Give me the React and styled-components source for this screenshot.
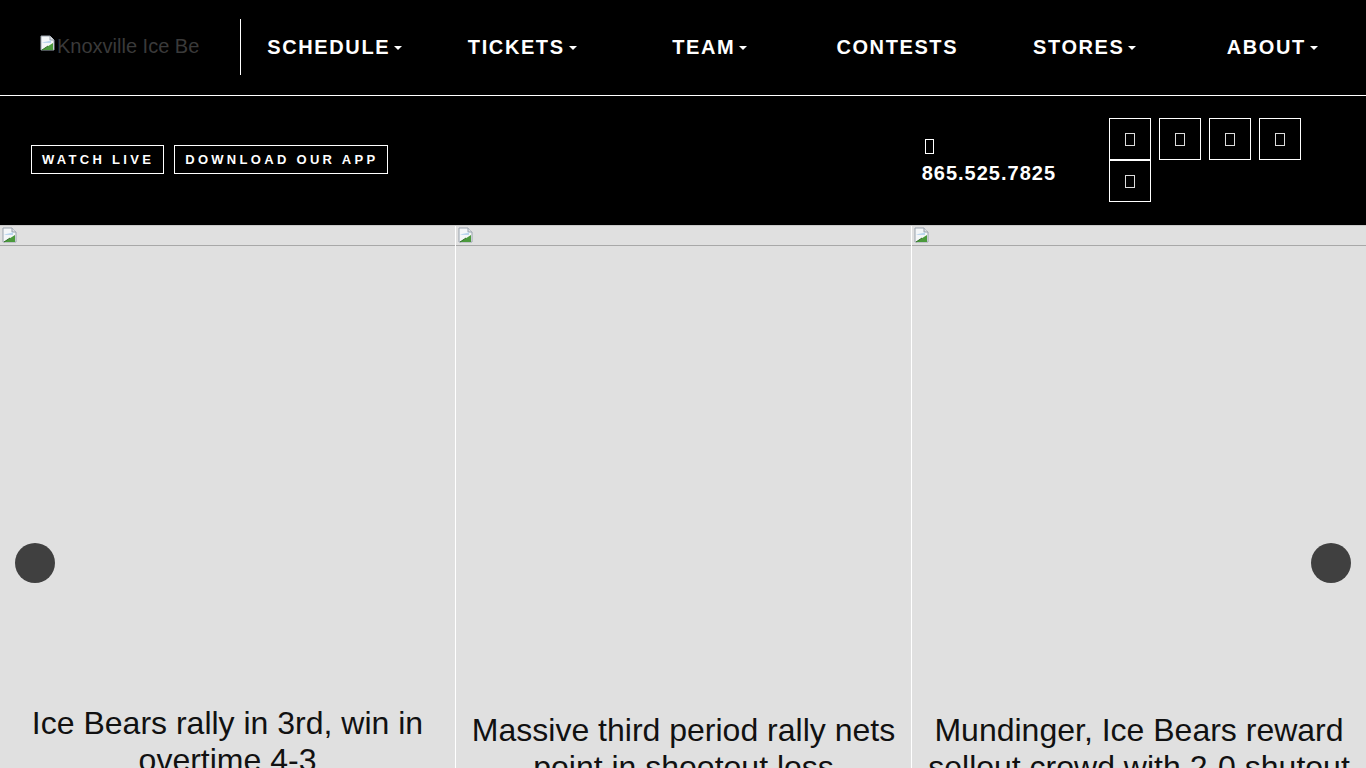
import React from "react";
import { styled, createGlobalStyle } from "styled-components";

const GlobalStyle = createGlobalStyle`
  html, body {
    margin: 0;
    padding: 0;
    background: #e0e0e0;
    font-family: "Liberation Sans", Arial, sans-serif;
    overflow: hidden;
  }
  * {
    box-sizing: border-box;
  }
`;

const navItems = [
  { label: "SCHEDULE", caret: true },
  { label: "TICKETS", caret: true },
  { label: "TEAM", caret: true },
  { label: "CONTESTS", caret: false },
  { label: "STORES", caret: true },
  { label: "ABOUT", caret: true },
];

const slides = [
  { title: "Ice Bears rally in 3rd, win in overtime 4-3", offset: 0 },
  { title: "Massive third period rally nets point in shootout loss", offset: 7 },
  { title: "Mundinger, Ice Bears reward sellout crowd with 2-0 shutout", offset: 7 },
];

function BrokenImage() {
  return (
    <BrokenIcon width="16" height="16" viewBox="0 0 16 16">
      <path d="M1 1h9l4 4v10H1z" fill="#f4f6f8" stroke="#9aa3ad" strokeWidth="1" />
      <path d="M10 1v4h4" fill="#dfe3e8" stroke="#9aa3ad" strokeWidth="1" />
      <path d="M2 8c3-2 6-1 9-3v3H2z" fill="#bcd6ee" />
      <path d="M2 15l11-7v7z" fill="#4b9a3c" />
      <path d="M2 15l6-4" stroke="#2f6d26" strokeWidth="1" />
    </BrokenIcon>
  );
}

function Caret() {
  return <CaretMark />;
}

function Tofu(props) {
  return <TofuBox className={props.size} />;
}

export default function App() {
  return (
    <>
      <GlobalStyle />
      <Header>
        <Logo>
          <BrokenImage />
          <LogoAlt>Knoxville Ice Bears</LogoAlt>
        </Logo>
        <Divider />
        <Nav>
          {navItems.map((item) => (
            <NavItem key={item.label}>
              {item.label}
              {item.caret && <Caret />}
            </NavItem>
          ))}
        </Nav>
      </Header>
      <SubBar>
        <Buttons>
          <OutlineButton>WATCH LIVE</OutlineButton>
          <OutlineButton>DOWNLOAD OUR APP</OutlineButton>
        </Buttons>
        <Phone>
          <Tofu size="phone" />
          <PhoneNumber>865.525.7825</PhoneNumber>
        </Phone>
        <Socials>
          {[0, 1, 2, 3, 4].map((i) => (
            <SocialBox key={i}>
              <Tofu size="social" />
            </SocialBox>
          ))}
        </Socials>
      </SubBar>
      <Carousel>
        <Slides>
          {slides.map((slide, i) => (
            <Slide key={i}>
              <SlideImage>
                <BrokenImage />
              </SlideImage>
              <SlideBody $offset={slide.offset}>
                <SlideTitle>{slide.title}</SlideTitle>
              </SlideBody>
            </Slide>
          ))}
        </Slides>
        <Arrow $side="left" />
        <Arrow $side="right" />
      </Carousel>
    </>
  );
}

const BrokenIcon = styled.svg`
  flex-shrink: 0;
  display: block;
`;

const Header = styled.header`
  display: flex;
  align-items: center;
  height: 96px;
  background: #000;
  border-bottom: 1px solid #fff;
  padding-left: 40px;
`;

const Logo = styled.div`
  width: 160px;
  margin-right: 40px;
  height: 24px;
  display: flex;
  align-items: flex-start;
  overflow: hidden;
  white-space: nowrap;
  margin-top: -2px;
`;

const LogoAlt = styled.span`
  color: #3a3a3a;
  font-size: 20px;
  line-height: 23px;
  margin-left: 1px;
`;

const Divider = styled.div`
  width: 1px;
  height: 56px;
  background: #fff;
  margin-top: -2px;
`;

const Nav = styled.nav`
  flex: 1;
  display: grid;
  grid-template-columns: repeat(6, 1fr);
`;

const NavItem = styled.a`
  display: flex;
  justify-content: center;
  align-items: center;
  color: #fff;
  font-size: 20px;
  font-weight: 700;
  letter-spacing: 1.6px;
  cursor: pointer;
`;

const CaretMark = styled.span`
  display: inline-block;
  width: 0;
  height: 0;
  margin-left: 4px;
  border-top: 4px solid #fff;
  border-left: 4px solid transparent;
  border-right: 4px solid transparent;
`;

const SubBar = styled.div`
  display: flex;
  align-items: center;
  height: 129px;
  background: #000;
  padding-left: 31px;
`;

const Buttons = styled.div`
  display: flex;
  gap: 10px;
  margin-top: -3px;
`;

const OutlineButton = styled.a`
  display: block;
  border: 1px solid #fff;
  color: #fff;
  font-size: 13px;
  font-weight: 700;
  letter-spacing: 3.3px;
  line-height: 27px;
  padding: 0 9px 0 10px;
  cursor: pointer;
`;

const Phone = styled.div`
  margin-left: auto;
  display: flex;
  flex-direction: column;
  align-items: flex-start;
  gap: 8px;
  margin-top: 1px;
`;

const PhoneNumber = styled.span`
  color: #fff;
  font-size: 20px;
  font-weight: 700;
  letter-spacing: 1px;
  line-height: 22px;
`;

const TofuBox = styled.span`
  display: inline-block;
  border: 1px solid #fff;
  &.phone {
    width: 9px;
    height: 15px;
    margin-left: 3px;
  }
  &.social {
    width: 10px;
    height: 13px;
    border-color: #ddd;
  }
`;

const Socials = styled.div`
  display: flex;
  flex-wrap: wrap;
  width: 200px;
  margin-left: 53px;
  margin-right: 57px;
  margin-top: -1px;
`;

const SocialBox = styled.a`
  display: flex;
  justify-content: center;
  align-items: center;
  width: 42px;
  height: 42px;
  border: 1px solid #fff;
  margin-right: 8px;
`;

const Carousel = styled.section`
  position: relative;
  border-top: 1px solid #c8c8c8;
  background: #e0e0e0;
`;

const Slides = styled.div`
  display: grid;
  grid-template-columns: 455px 455px 1fr;
  gap: 1px;
  background: #fff;
  height: 600px;
`;

const Slide = styled.article`
  background: #e0e0e0;
  display: flex;
  flex-direction: column;
`;

const SlideImage = styled.div`
  height: 20px;
  padding: 1px 0 0 2px;
  border-bottom: 1px solid #a8a8a8;
  line-height: 0;
`;

const SlideBody = styled.div`
  padding: ${(p) => 459 + p.$offset}px 12px 0;
  text-align: center;
`;

const SlideTitle = styled.h2`
  margin: 0;
  color: #111;
  font-size: 32px;
  font-weight: 400;
  line-height: 37px;
`;

const Arrow = styled.button`
  position: absolute;
  top: 317px;
  ${(p) => (p.$side === "left" ? "left: 15px;" : "right: 15px;")}
  width: 40px;
  height: 40px;
  border-radius: 50%;
  border: none;
  background: #404040;
  padding: 0;
`;
